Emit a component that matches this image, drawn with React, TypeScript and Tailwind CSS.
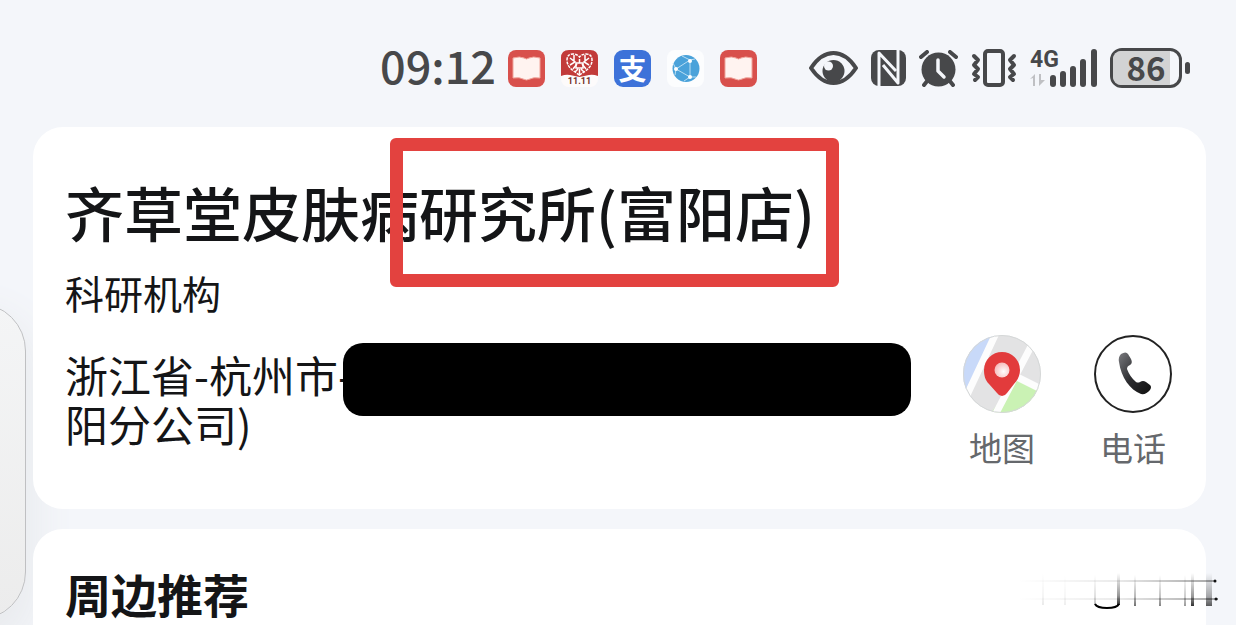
import type { ReactNode } from "react"

const INK = "#47484a"

export default function App() {
  return (
    <div className="relative flex min-h-screen flex-col overflow-hidden bg-[#f4f6fa] font-['Noto_Sans_CJK_SC',sans-serif] text-[#141517]">
      <StatusBar />
      <SidePanel />
      <main className="relative ml-[33px] mr-[30px] flex flex-1 flex-col gap-5">
        <PlaceCard />
        <NearbyCard />
      </main>
    </div>
  )
}

function StatusBar() {
  return (
    <header className="flex items-center justify-end pb-[35px] pr-[46px] pt-11 text-[#47484a]">
      <time className="mb-1.5 mr-3 text-[45px] font-medium leading-[42px]">09:12</time>
      <div className="mr-[52px] flex items-center gap-4">
        <BookIcon />
        <SaleIcon />
        <PayIcon />
        <GlobeIcon />
        <BookIcon />
      </div>
      <div className="flex items-center gap-[13px]">
        <EyeIcon />
        <NfcIcon />
        <AlarmIcon />
        <VibrateIcon />
        <SignalIcon />
        <Battery level={86} />
      </div>
    </header>
  )
}

// drawer edge peeking in from the left
function SidePanel() {
  return (
    <div className="absolute -left-20 top-[303px] h-[317px] w-[106px] rounded-[48px] border border-[#bfc0c2] bg-linear-to-b from-[#f4f5f6] to-[#ececec] shadow-[0_20px_40px_10px_#e9ebee]" />
  )
}

function PlaceCard() {
  return (
    <section className="rounded-[30px] bg-white pb-10 pl-8 pr-[34px] pt-[53px]">
      <h1 className="whitespace-nowrap text-[59px] font-medium leading-[64px]">
        齐草堂皮肤病
        <span className="relative">
          研究所(富阳店)
          <span className="absolute -left-[29px] -right-6 -top-[31px] h-[149px] rounded-md border-[13px] border-[#e3423f]" />
        </span>
      </h1>
      <p className="mt-6 text-[39px] leading-[48px]">科研机构</p>
      <div className="mt-[19px] flex items-start justify-between">
        <address className="relative whitespace-nowrap pt-[15px] text-[43px] not-italic leading-[49px]">
          浙江省-杭州市-
          <br />
          阳分公司)
          <span className="absolute left-[278px] top-2 h-[73px] w-[568px] rounded-[20px] bg-black" />
        </address>
        <div className="flex gap-[53px]">
          <Action label="地图">
            <MapIcon />
          </Action>
          <Action label="电话">
            <PhoneIcon />
          </Action>
        </div>
      </div>
    </section>
  )
}

function Action({ label, children }: { label: string; children: ReactNode }) {
  return (
    <button className="flex w-[78px] flex-col items-center gap-3.5 pb-0.5 text-[33px] leading-10 text-[#65686c]">
      {children}
      <span>{label}</span>
    </button>
  )
}

function NearbyCard() {
  return (
    <section className="relative flex-1 rounded-t-[30px] bg-white pl-8 pt-9">
      <h2 className="text-[46px] font-bold leading-[56px]">周边推荐</h2>
      <StreakMark />
    </section>
  )
}

function StreakMark() {
  return (
    <svg className="absolute -right-3 top-9 h-14 w-[204px]" viewBox="0 0 204 56" fill="none">
      <defs>
        <linearGradient id="fade" x1="0" x2="1" y1="0" y2="0">
          <stop offset="0" stopColor="#000" stopOpacity="0" />
          <stop offset="0.5" stopColor="#000" stopOpacity="0.08" />
          <stop offset="1" stopColor="#000" stopOpacity="0.35" />
        </linearGradient>
        <linearGradient id="drop" x1="0" x2="0" y1="0" y2="1">
          <stop offset="0" stopColor="#000" stopOpacity="0" />
          <stop offset="0.7" stopColor="#000" stopOpacity="0.4" />
          <stop offset="1" stopColor="#000" stopOpacity="0.8" />
        </linearGradient>
      </defs>
      <rect x="4" y="15" width="198" height="2" fill="url(#fade)" />
      <rect x="4" y="33" width="200" height="2" fill="url(#fade)" />
      <circle cx="201" cy="16" r="1.5" fill="#111" />
      <circle cx="202" cy="34" r="1.5" fill="#111" />
      <g fill="url(#drop)">
        <rect x="28" y="8" width="2" height="32" opacity="0.1" />
        <rect x="50" y="10" width="2" height="30" opacity="0.08" />
        <rect x="80" y="10" width="2" height="30" opacity="0.3" />
        <rect x="103" y="8" width="3" height="32" />
        <rect x="120" y="10" width="2" height="31" opacity="0.7" />
        <rect x="145" y="10" width="2" height="31" opacity="0.6" />
        <rect x="170" y="10" width="2" height="31" opacity="0.5" />
        <rect x="177" y="8" width="3" height="33" />
        <rect x="192" y="8" width="6" height="33" opacity="0.8" />
      </g>
      <path d="M81 39q2 4 12 4t12-4" stroke="#000" strokeWidth="2" />
    </svg>
  )
}

function BookIcon() {
  return (
    <svg className="h-[37px] w-[37px]" viewBox="0 0 37 37">
      <rect width="37" height="37" rx="8" fill="#d8504c" />
      <path
        d="M5 8q7-2 11 0 2.500 2 5 0 4-2 11 0v20q-7-1-10 1-3.500 2-7 0-3-2-10-1z"
        fill="#fff3f0"
        stroke="#f0a49b"
        strokeWidth="1"
      />
    </svg>
  )
}

function SaleIcon() {
  return (
    <svg className="h-[37px] w-[37px] overflow-visible" viewBox="0 0 37 37">
      <rect width="37" height="37" rx="8" fill="#fdfbfb" />
      <path d="M0 26V8q0-8 8-8h21q8 0 8 8v18q-5-2-9-1l-9.500 2-9.500-2q-4-1-9 1z" fill="#c23b3a" />
      <path
        d="M18.500 25C11 20 6 17 6 10q0-6 6-6 4 0 6.500 3Q21 4 25 4q6 0 6 6c0 7-5 10-12.500 15z"
        fill="none"
        stroke="#fff"
        strokeWidth="1.500"
        strokeDasharray="3 1"
      />
      <g fill="none" stroke="#fff" strokeWidth="1.500">
        <path d="M9 8l5 4-5 3M28 8l-5 4 5 3M13 5v6M24 5v6M12 19l4-5M25 19l-4-5M18.500 9v4M18.500 19v5" />
        <path d="M15 13h7v5h-7zM14 22l3-3M23 22l-3-3" />
      </g>
      <text x="18.500" y="34" textAnchor="middle" fontSize="9" fontWeight="700" fill="#74322b" fontFamily="Roboto, sans-serif">
        11.11
      </text>
    </svg>
  )
}

function PayIcon() {
  return (
    <span className="flex h-[37px] w-[37px] items-center justify-center rounded-[9px] bg-[#3d72d9] text-[28px] font-bold leading-[37px] text-white">
      支
    </span>
  )
}

function GlobeIcon() {
  return (
    <svg className="h-[37px] w-[37px]" viewBox="0 0 37 37">
      <rect width="37" height="37" rx="8" fill="#fcfdfe" />
      <circle cx="19" cy="18.500" r="13.500" fill="#4aa2da" />
      <path d="M9 19L23 10V27zM15 6l8 4 5-1M9 19l-3-6M9 19l-1 6M23 27l-6 4M23 27l6 0" fill="none" stroke="#b9def3" strokeWidth="1" />
      <g fill="#fff">
        <circle cx="9" cy="19" r="2" />
        <circle cx="23" cy="11" r="2" />
        <circle cx="23" cy="27" r="2" />
      </g>
    </svg>
  )
}

function EyeIcon() {
  return (
    <svg className="h-[34px] w-[49px]" viewBox="0 0 49 34" fill="none">
      <path d="M2 17Q12 2 24.500 2T47 17Q37 32 24.500 32T2 17z" stroke={INK} strokeWidth="4" strokeLinejoin="round" />
      <circle cx="24.500" cy="20" r="11" fill={INK} />
      <circle cx="19.500" cy="15" r="4.500" fill="#f4f6fa" />
    </svg>
  )
}

function NfcIcon() {
  return (
    <svg className="h-9 w-[35px]" viewBox="0 0 35 36" fill="none">
      <rect width="35" height="36" rx="8" fill={INK} />
      <g stroke="#f4f6fa" strokeWidth="3" strokeLinejoin="round">
        <path d="M8 36V3L25 21" />
        <path d="M12 15L27 33V0" />
      </g>
    </svg>
  )
}

function AlarmIcon() {
  return (
    <svg className="h-[37px] w-[39px]" viewBox="0 0 39 37" fill="none">
      <g stroke={INK} strokeWidth="4" strokeLinecap="round">
        <path d="M2 7l6-5M37 7l-6-5M9 30l-4 5M30 30l4 5" />
      </g>
      <circle cx="19.500" cy="19.500" r="17" fill={INK} />
      <path d="M19 10v11l6 6" stroke="#f4f6fa" strokeWidth="3.500" strokeLinecap="round" strokeLinejoin="round" />
    </svg>
  )
}

function VibrateIcon() {
  return (
    <svg className="h-[38px] w-[46px]" viewBox="0 0 46 38" fill="none" stroke={INK} strokeLinejoin="round" strokeLinecap="round">
      <rect x="14" y="2" width="18" height="34" rx="3" strokeWidth="4" />
      <path d="M3 7l4 4-4 5 4 4-4 5 4 3-3 3M43 7l-4 4 4 5-4 4 4 5-4 3 3 3" strokeWidth="4" />
    </svg>
  )
}

function SignalIcon() {
  return (
    <svg className="h-[38px] w-[67px] overflow-visible" viewBox="0 0 67 38">
      <text x="0" y="18" fontSize="23" fontWeight="700" fill={INK} fontFamily="Roboto, sans-serif">
        4G
      </text>
      <path d="M0 30l5-5v12H3v-8zM9 25v12l6-6h-4v-6z" fill="#bfc0c3" />
      <g fill={INK}>
        <rect x="20" y="26" width="6" height="12" rx="3" />
        <rect x="30" y="22" width="6" height="16" rx="3" />
        <rect x="40" y="17" width="6" height="21" rx="3" />
        <rect x="50" y="10" width="6" height="28" rx="3" />
        <rect x="61" y="0" width="6" height="38" rx="3" />
      </g>
    </svg>
  )
}

function Battery({ level }: { level: number }) {
  return (
    <div className="flex items-center gap-[3px]">
      <div className="relative h-10 w-[72px] rounded-xl border-[3px] border-[#47484a]">
        <div className="h-full rounded-l-lg bg-[#d2d3d4]" style={{ width: `${level}%` }} />
        <span className="absolute inset-x-0 -top-1 text-center text-[33px] font-bold leading-10">{level}</span>
      </div>
      <div className="h-3 w-[5px] rounded-full bg-[#47484a]" />
    </div>
  )
}

function MapIcon() {
  return (
    <svg className="h-[78px] w-[78px]" viewBox="0 0 78 78">
      <defs>
        <clipPath id="disc">
          <circle cx="39" cy="39" r="39" />
        </clipPath>
        <radialGradient id="dot" cx="0.6" cy="0.6" r="0.6">
          <stop offset="0" stopColor="#fff" />
          <stop offset="1" stopColor="#f6bdbd" />
        </radialGradient>
      </defs>
      <g clipPath="url(#disc)">
        <rect width="78" height="78" fill="#e3e3e4" />
        <path d="M0 0h32L2 58H0z" fill="#c8d9f9" />
        <path d="M28 78L54 42l24 12v24z" fill="#caf2b4" />
        <path d="M34 -4L4 60M74 0L32 80M54 42l28 14" stroke="#fdfdfd" strokeWidth="7" />
      </g>
      <circle cx="39" cy="39" r="38.500" fill="none" stroke="#d5d8d8" />
      <path d="M39 61q-3 0-5-3L26 49C22 45 21 40 21 35a18 18 0 0 1 36 0c0 5-2 10-6 14l-7 9q-2 3-5 3z" fill="#e23b3c" />
      <circle cx="39" cy="35" r="7.500" fill="url(#dot)" />
    </svg>
  )
}

function PhoneIcon() {
  return (
    <svg className="h-[78px] w-[78px]" viewBox="0 0 78 78" fill="none">
      <defs>
        <linearGradient id="handset" x1="0" x2="1" y1="0" y2="1">
          <stop offset="0" stopColor="#7a7b7f" />
          <stop offset="0.5" stopColor="#2c2c2f" />
          <stop offset="1" stopColor="#111" />
        </linearGradient>
      </defs>
      <circle cx="39" cy="39" r="38" stroke="#222" strokeWidth="2" />
      <path
        d="M27 19q5-3 7 0l3 5q2 4-1 6-3 1-3 4 3 8 9 13 2 1 4 0 3-2 6 0l4 3q2 2 0 5-4 5-9 4C36 55 27 42 25 27q-1-5 2-8z"
        fill="url(#handset)"
      />
    </svg>
  )
}
